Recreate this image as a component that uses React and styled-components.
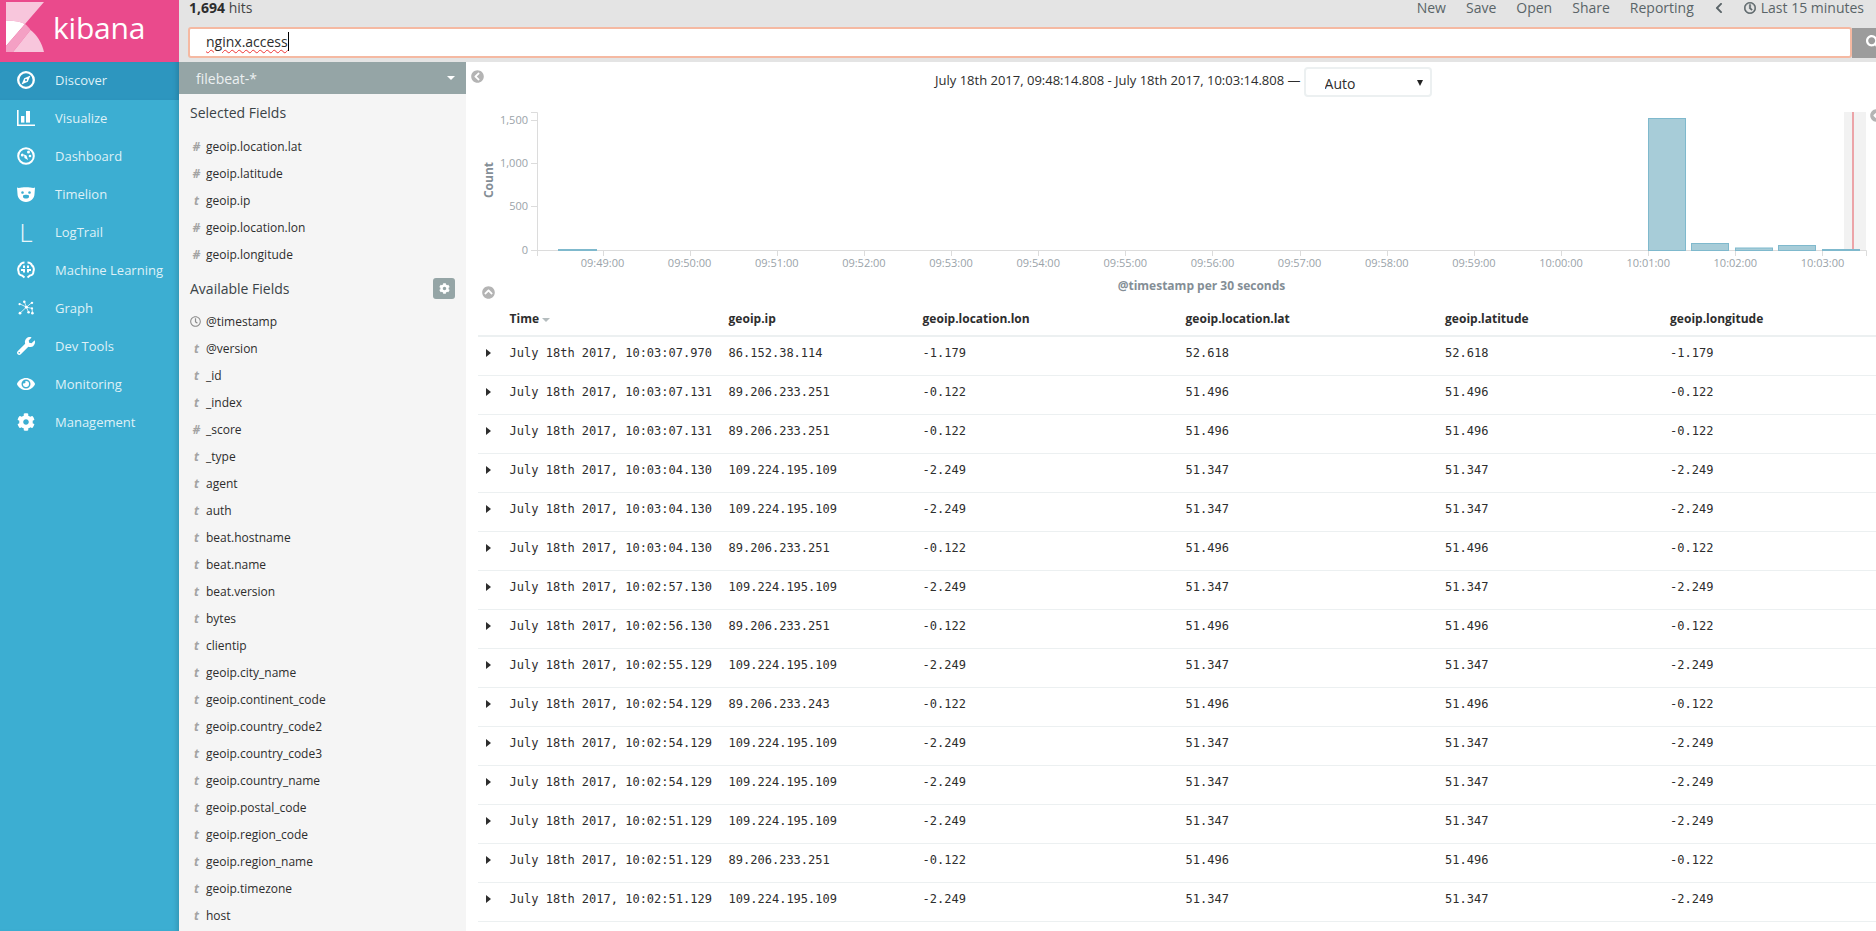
import React from 'react';
import styled, { createGlobalStyle } from 'styled-components';
import { FaWrench, FaEye, FaCog, FaRegClock, FaChevronLeft, FaSearch, FaChevronCircleLeft, FaChevronCircleUp } from 'react-icons/fa';

const Global = createGlobalStyle`
  html, body { margin: 0; padding: 0; height: 100%; overflow: hidden; background: #fff; }
  body { font-family: "Open Sans", "Liberation Sans", sans-serif; font-size: 13px; color: #2d2d2d; }
  * { box-sizing: border-box; }
`;

const Page = styled.div`display: flex; width: 1876px; height: 931px; overflow: hidden;`;
const Sidebar = styled.nav`
  width: 179px; flex: none; background: #3caed2; display: flex; flex-direction: column;
  box-shadow: inset -5px 0 5px -3px rgba(0,0,0,.14);
`;
const Logo = styled.div`
  height: 62px; background: #ea4a8c; display: flex; align-items: flex-start; padding: 2px 0 0 6px; gap: 9px;
`;
const LogoText = styled.span`
  color: #fff; font-size: 30px; line-height: 52px; letter-spacing: -.2px; font-weight: 400;
`;
const NavItem = styled.div`
  height: 38px; display: flex; align-items: center; padding: 0 0 2px 17px; color: #dff1f7; font-size: 13px;
  background: ${p => (p.$active ? '#2d96bf' : 'transparent')};
  box-shadow: ${p => (p.$active ? 'inset -5px 0 5px -3px rgba(0,0,0,.14)' : 'none')};
`;
const NavIcon = styled.span`
  width: 18px; height: 18px; margin-right: 20px; color: #fff; display: flex; align-items: center; justify-content: center;
  svg { width: 18px; height: 18px; display: block; }
`;
const Column = styled.div`flex: 1; display: flex; flex-direction: column; min-width: 0;`;
const TopBar = styled.header`height: 62px; flex: none; background: #e4e4e4; display: flex; flex-direction: column;`;
const TopRow = styled.div`
  height: 28px; padding: 0 12px 0 10px; display: flex; align-items: flex-start; justify-content: space-between; line-height: 16px;
`;
const Hits = styled.div`font-size: 14px; color: #444; b { color: #2d2d2d; font-weight: 700; }`;
const Menu = styled.div`display: flex; align-items: center; color: #5a6468; font-size: 14px; gap: 20px; height: 16px;`;
const MenuIconText = styled.span`display: flex; align-items: center; gap: 5px; svg { width: 12px; height: 12px; stroke: currentColor; stroke-width: 20px; }`;
const Chevron = styled.span`display: flex; width: 10px; svg { width: 10px; height: 12px; }`;
const SearchRow = styled.div`display: flex; height: 30px; padding-left: 9px;`;
const SearchBox = styled.div`
  flex: 1; height: 31px; margin-top: -1px; background: #fff; border: 2px solid #f5b9a2; border-radius: 3px; padding-left: 16px;
  font-size: 14px; line-height: 26px; color: #2d2d2d; display: flex;
`;
const Misspelt = styled.span`text-decoration: underline wavy #e33; text-decoration-thickness: 1px; text-underline-offset: 2px;`;
const Caret = styled.span`width: 1px; height: 19px; background: #000; margin-top: 3px;`;
const SearchButton = styled.div`
  width: 24px; flex: none; background: #9c9c9c; color: #fff; padding: 7px 0 0 14px; overflow: hidden; svg { width: 14px; height: 14px; display: block; overflow: visible; }
`;
const Body = styled.div`flex: 1; display: flex; min-height: 0;`;
const FieldPanel = styled.aside`width: 287px; flex: none; background: #f5f5f5; display: flex; flex-direction: column; overflow: hidden;`;
const IndexBar = styled.div`
  height: 32px; flex: none; background: #95a5a6; color: #ecf0f1; font-size: 14px; padding: 0 11px 0 17px;
  display: flex; align-items: center; justify-content: space-between;
`;
const DownCaret = styled.span`width: 0; height: 0; border: 4px solid transparent; border-top-color: #fff; border-bottom: 0;`;
const SectionTitle = styled.div`
  height: ${p => p.$h}px; margin-bottom: ${p => p.$mb || 0}px; padding: 0 11px; display: flex; align-items: center; justify-content: space-between; font-size: 14px; color: #3a4347; flex: none;
`;
const SettingsButton = styled.span`
  width: 22px; height: 21px; background: #95a5a6; border-radius: 3px; color: #fff; display: flex; align-items: center; justify-content: center;
  svg { width: 11px; height: 11px; }
`;
const FieldRow = styled.div`height: 27px; flex: none; display: flex; align-items: center; padding-left: 11px; font-size: 12px; color: #2d2d2d;`;
const FieldType = styled.span`
  width: 16px; flex: none; font-style: italic; font-weight: 700; font-size: 12px; color: #a3a3a3; text-align: center; padding-right: 3px;
  svg { width: 11px; height: 11px; display: block; color: #8c8c8c; }
`;
const Main = styled.main`flex: 1; position: relative; display: flex; flex-direction: column; min-width: 0;`;
const CollapseIcon = styled.span`
  position: absolute; left: ${p => p.$x}px; top: ${p => p.$y}px; color: #b4b4b4; display: flex;
  svg { width: 13px; height: 13px; }
`;
const RangeRow = styled.div`
  height: 38px; flex: none; display: flex; align-items: flex-start; padding: 5px 0 0 469px; font-size: 13px; color: #2d2d2d; gap: 3px;
`;
const RangeText = styled.span`line-height: 24px; margin-top: 1px;`;
const IntervalWrap = styled.span`position: relative; display: block; width: 128px; height: 30px;`;
const Interval = styled.select`
  appearance: none; display: block; width: 128px; height: 30px; border: 2px solid #ecf0f1; border-radius: 4px; background: #fff; font-family: inherit; font-size: 14px;
  color: #2d2d2d; padding: 2px 0 0 19px; outline: none; margin: 0;
`;
const IntervalCaret = styled.span`
  position: absolute; right: 9px; top: 13px; width: 0; height: 0; pointer-events: none;
  border-left: 3.5px solid transparent; border-right: 3.5px solid transparent; border-top: 6px solid #222;
`;
const ChartSvg = styled.svg`display: block; width: 1410px; height: 196px; flex: none;`;
const Axis = styled.text`font-family: "Open Sans", sans-serif; font-size: 11px; fill: #9aa3a9;`;
const AxisTitle = styled.text`font-family: "Open Sans", sans-serif; font-size: 12px; font-weight: 700; fill: #848e96;`;
const Table = styled.div`margin-left: 12px; flex: none;`;
const HeadRow = styled.div`
  display: grid; grid-template-columns: 31.6px 219px 194px 263px 259.5px 225px 1fr; align-items: center;
  height: 41px; padding-top: 5px; border-bottom: 2px solid #ecf0f1;
`;
const Row = styled(HeadRow)`height: 39px; padding: 0 0 6px; border-bottom-width: 1px;`;
const Head = styled.div`font-weight: 700; font-size: 12px; color: #2d2d2d; display: flex; align-items: center; gap: 3px;`;
const SortCaret = styled.span`width: 0; height: 0; margin-top: 3px; border: 4px solid transparent; border-top-color: #b4bcbe; border-bottom: 0;`;
const Cell = styled.div`font-family: "DejaVu Sans Mono", "Liberation Mono", monospace; font-size: 12px; color: #2d2d2d; white-space: nowrap;`;
const Expand = styled.span`
  display: block; width: 0; height: 0; margin-left: 8px; border-left: 5px solid #2d2d2d; border-top: 4px solid transparent; border-bottom: 4px solid transparent;
`;
const LetterIcon = styled.span`font-size: 26px; font-weight: 300; line-height: 18px; color: #e9f6fa;`;

const I = ({ children, fill = 'none', box = '0 0 18 18' }) => <svg viewBox={box} fill={fill}>{children}</svg>;
const CompassIcon = () => <I><circle cx="9" cy="9" r="7.8" stroke="currentColor" strokeWidth="2.3"/><path fillRule="evenodd" fill="currentColor" d="M13.500 4.500 L10.800 10.800 L4.500 13.500 L7.200 7.200Z M9 8a1 1 0 1 0 .01 0z"/></I>;
const VisualizeIcon = () => <I fill="currentColor"><path d="M0 1h1.6v14.6H18V17H0z"/><rect x="4" y="7" width="3.4" height="6.6"/><rect x="9" y="2" width="4" height="11.6"/></I>;
const DashIcon = () => <I><circle cx="9" cy="9" r="7.8" stroke="currentColor" strokeWidth="2"/><g fill="currentColor"><circle cx="5.3" cy="8" r="1.5"/><circle cx="11.5" cy="5" r="1.5"/><circle cx="13" cy="9" r="1.3"/><path d="M7 7.5 L9.5 8.5 L11 13 L7.5 11z"/></g></I>;
const BearIcon = () => <I fill="currentColor"><path fillRule="evenodd" d="M0 2.500 C2 3.600 3.500 2.300 5 2.500 C7 2 11 2 13 2.500 C14.500 2.300 16 3.600 18 2.500 L17.500 9 C17.500 13 14 17 9 17 C4 17 .5 13 .5 9z M5.500 6.200a1.300 1.300 0 1 0 .01 0z M12.500 6.200a1.300 1.300 0 1 0 .01 0z M6 10.500 C7 9.600 11 9.600 12 10.500 L12 12 C11.500 14 6.500 14 6 12z"/></I>;
const MLIcon = () => <I><g stroke="currentColor" strokeWidth="2" fill="none"><path d="M7.500 1.500 C4.500 1.500 3.500 3 3 4.500 C1 5.500 .8 9 1.600 10.500 C1.500 13 3 14.500 5 14.500 L7.500 16.500"/><path d="M10.500 1.500 C13.500 1.500 14.500 3 15 4.500 C17 5.500 17.200 9 16.400 10.500 C16.500 13 15 14.500 13 14.500 L10.500 16.500"/><path d="M4 9 H7 V11.500 M7 4.500 V7"/><path d="M14 9 H11 V11.500 M11 4.500 V7"/></g></I>;
const GraphIcon = () => <I box="-1.5 -1.5 21 21"><g stroke="currentColor" strokeWidth=".9"><path d="M7 1.500 L9.500 8 L16 2.500 M9.500 8 L1.500 4 M9.500 8 L2 15 M9.500 8 L16 9.500 L16.500 14.500 M9.500 8 L12 14"/></g><g fill="currentColor"><circle cx="7" cy="1.800" r="1.500"/><circle cx="16" cy="3" r="1.400"/><circle cx="1.500" cy="4.500" r="1.300"/><circle cx="9.500" cy="8" r="1.700"/><circle cx="16" cy="9.500" r="1.300"/><circle cx="2" cy="15" r="1.600"/><circle cx="12" cy="14" r="1.500"/><circle cx="16.500" cy="15" r="1.500"/></g></I>;

const nav = [
  ['Discover', <CompassIcon />], ['Visualize', <VisualizeIcon />], ['Dashboard', <DashIcon />], ['Timelion', <BearIcon />],
  ['LogTrail', <LetterIcon>L</LetterIcon>], ['Machine Learning', <MLIcon />], ['Graph', <GraphIcon />], ['Dev Tools', <FaWrench />],
  ['Monitoring', <FaEye />], ['Management', <FaCog />],
];
const selected = [['#', 'geoip.location.lat'], ['#', 'geoip.latitude'], ['t', 'geoip.ip'], ['#', 'geoip.location.lon'], ['#', 'geoip.longitude']];
const available = [['c', '@timestamp'], ['t', '@version'], ['t', '_id'], ['t', '_index'], ['#', '_score'], ['t', '_type'], ['t', 'agent'], ['t', 'auth'], ['t', 'beat.hostname'], ['t', 'beat.name'], ['t', 'beat.version'], ['t', 'bytes'], ['t', 'clientip'], ['t', 'geoip.city_name'], ['t', 'geoip.continent_code'], ['t', 'geoip.country_code2'], ['t', 'geoip.country_code3'], ['t', 'geoip.country_name'], ['t', 'geoip.postal_code'], ['t', 'geoip.region_code'], ['t', 'geoip.region_name'], ['t', 'geoip.timezone'], ['t', 'host']];
const A = ['109.224.195.109', '-2.249', '51.347'];
const B = ['89.206.233.251', '-0.122', '51.496'];
const rows = [
  ['10:03:07.970', '86.152.38.114', '-1.179', '52.618'], ['10:03:07.131', ...B], ['10:03:07.131', ...B], ['10:03:04.130', ...A], ['10:03:04.130', ...A], ['10:03:04.130', ...B],
  ['10:02:57.130', ...A], ['10:02:56.130', ...B], ['10:02:55.129', ...A], ['10:02:54.129', '89.206.233.243', '-0.122', '51.496'], ['10:02:54.129', ...A], ['10:02:54.129', ...A],
  ['10:02:51.129', ...A], ['10:02:51.129', ...B], ['10:02:51.129', ...A],
];
const times = ['09:49:00', '09:50:00', '09:51:00', '09:52:00', '09:53:00', '09:54:00', '09:55:00', '09:56:00', '09:57:00', '09:58:00', '09:59:00', '10:00:00', '10:01:00', '10:02:00', '10:03:00'];
const bars = [[558, 38, 249], [1648, 37, 118], [1691, 37, 243], [1735, 37, 247.5], [1778, 37, 245], [1822, 37, 249]];
const yTicks = [['1,500', 120], ['1,000', 163], ['500', 206], ['0', 249.5]];

const Field = ({ f }) => (
  <FieldRow>
    <FieldType>{f[0] === 'c' ? <FaRegClock /> : f[0]}</FieldType>
    <span>{f[1]}</span>
  </FieldRow>
);

const Chart = () => (
  <ChartSvg viewBox="466 100 1410 196">
    <rect x="1844" y="112" width="22" height="138" fill="#f2f2f2" />
    <rect x="1852" y="112" width="2" height="138" fill="#eca4a8" />
    <path d="M531 112.500H537.500V256M531 120.500H537M531 163.500H537M531 206.500H537M531 250.500H1866.500V256" stroke="#dcdcdc" fill="none" />
    {times.map((t, i) => {
      const x = Math.round(602.5 + i * 87.14) + 0.5;
      return <path key={t} d={`M${x} 250V256`} stroke="#dcdcdc" />;
    })}
    {bars.map(([x, w, y]) => <rect key={x} x={x + .5} y={y + .5} width={w} height={250 - y} fill="#a7ccd8" stroke="#7fb9cd" />)}
    {yTicks.map(([t, y]) => <Axis key={t} x="528" y={y + 4} textAnchor="end">{t}</Axis>)}
    {times.map((t, i) => <Axis key={t} x={602.5 + i * 87.14} y="267" textAnchor="middle">{t}</Axis>)}
    <AxisTitle x="0" y="0" textAnchor="middle" transform="translate(493 180) rotate(-90)">Count</AxisTitle>
    <AxisTitle x="1201.500" y="290" textAnchor="middle">@timestamp per 30 seconds</AxisTitle>
  </ChartSvg>
);

export default function App() {
  return (
    <Page>
      <Global />
      <Sidebar>
        <Logo>
          <svg width="38" height="50" viewBox="0 0 38 50">
            <path d="M0 0H38L19 22C13 19 6 18.500 0 19Z" fill="#f8c6dc" />
            <path d="M0 19C6 18.500 13 19 19 22L0 44Z" fill="#fff" />
            <path d="M0 44L19 22C21 23.500 23 25.500 24.500 28L7 50H0Z" fill="#f4a0c4" />
            <path d="M7 50L24.500 28C31 33 36 41 38 50Z" fill="#f8c6dc" />
          </svg>
          <LogoText>kibana</LogoText>
        </Logo>
        {nav.map(([label, icon], i) => (
          <NavItem key={label} $active={i === 0}>
            <NavIcon>{icon}</NavIcon>
            {label}
          </NavItem>
        ))}
      </Sidebar>
      <Column>
        <TopBar>
          <TopRow>
            <Hits><b>1,694</b> hits</Hits>
            <Menu>
              <span>New</span><span>Save</span><span>Open</span><span>Share</span><span>Reporting</span>
              <Chevron><FaChevronLeft /></Chevron>
              <MenuIconText><FaRegClock />Last 15 minutes</MenuIconText>
            </Menu>
          </TopRow>
          <SearchRow>
            <SearchBox><Misspelt>nginx.access</Misspelt><Caret /></SearchBox>
            <SearchButton><FaSearch /></SearchButton>
          </SearchRow>
        </TopBar>
        <Body>
          <FieldPanel>
            <IndexBar>filebeat-*<DownCaret /></IndexBar>
            <SectionTitle $h={37} $mb={2}>Selected Fields</SectionTitle>
            {selected.map(f => <Field key={f[1]} f={f} />)}
            <SectionTitle $h={40}>Available Fields<SettingsButton><FaCog /></SettingsButton></SectionTitle>
            {available.map(f => <Field key={f[1]} f={f} />)}
          </FieldPanel>
          <Main>
            <CollapseIcon $x={5} $y={8}><FaChevronCircleLeft /></CollapseIcon>
            <CollapseIcon $x={1404} $y={47}><FaChevronCircleLeft /></CollapseIcon>
            <CollapseIcon $x={16} $y={224}><FaChevronCircleUp /></CollapseIcon>
            <RangeRow>
              <RangeText>July 18th 2017, 09:48:14.808 - July 18th 2017, 10:03:14.808 —</RangeText>
              <IntervalWrap>
                <Interval defaultValue="Auto"><option>Auto</option></Interval>
                <IntervalCaret />
              </IntervalWrap>
            </RangeRow>
            <Chart />
            <Table>
              <HeadRow>
                <span />
                <Head>Time<SortCaret /></Head>
                <Head>geoip.ip</Head>
                <Head>geoip.location.lon</Head>
                <Head>geoip.location.lat</Head>
                <Head>geoip.latitude</Head>
                <Head>geoip.longitude</Head>
              </HeadRow>
              {rows.map((r, i) => (
                <Row key={i}>
                  <Expand />
                  <Cell>July 18th 2017, {r[0]}</Cell>
                  <Cell>{r[1]}</Cell>
                  <Cell>{r[2]}</Cell>
                  <Cell>{r[3]}</Cell>
                  <Cell>{r[3]}</Cell>
                  <Cell>{r[2]}</Cell>
                </Row>
              ))}
            </Table>
          </Main>
        </Body>
      </Column>
    </Page>
  );
}
